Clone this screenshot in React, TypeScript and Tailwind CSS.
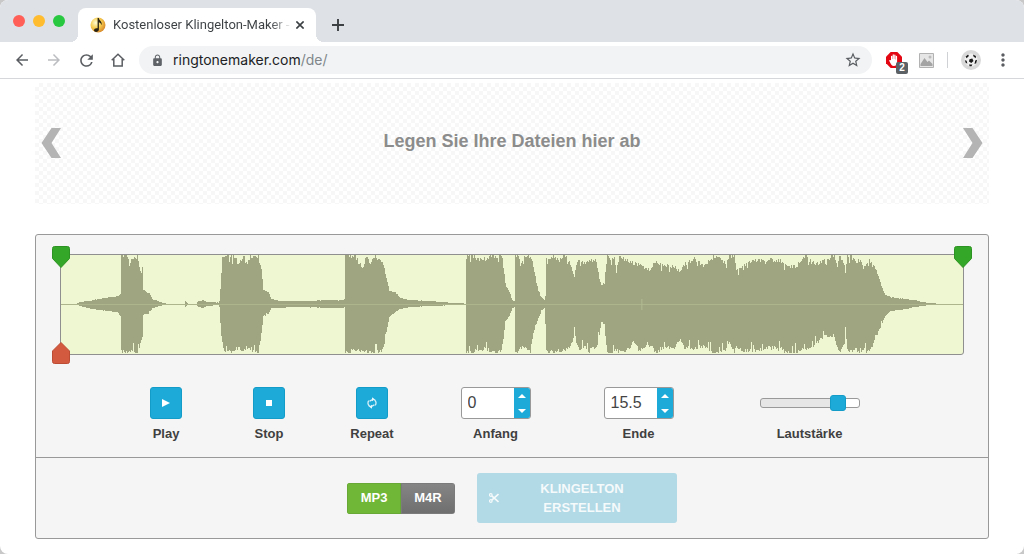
import { useMemo, useState } from "react";
import type { ReactNode } from "react";
import {
  MdArrowBack,
  MdArrowForward,
  MdLock,
  MdMoreVert,
  MdRefresh,
  MdStarBorder,
} from "react-icons/md";

/* Envelope key points: x, height above the axis, height below the axis. */
const ENVELOPE: [number, number, number][] = [
  [0, 0.5, 0.5], [15, 0.5, 0.5], [19, 2, 2], [31, 4, 5], [44, 6, 7], [56, 8, 8], [59, 10, 12], [59.9, 10, 10],
  [60, 49, 49], [66, 48, 49], [69, 43, 48], [76, 48, 49], [79, 34, 40], [81, 36, 32], [82, 14, 11], [88, 11, 9],
  [91, 5, 4], [99, 2, 2], [105, 0.5, 0.5], [123, 0.5, 0.5], [124, 3, 3], [127, 0.5, 0.5], [135, 0.5, 0.5],
  [137, 3, 3], [142, 4, 4], [145, 2, 2], [157, 1.5, 1], [158, 3, 3], [159, 16, 20], [161, 46, 44], [163, 49, 48],
  [169, 49, 48], [174, 48, 46], [177, 40, 43], [182, 49, 48], [186, 41, 43], [189, 49, 48], [197, 47, 49],
  [200, 35, 30], [202, 15, 12], [207, 12, 10], [210, 5, 4], [219, 3, 4], [229, 3, 3], [282, 4, 4], [283, 5, 4],
  [284, 49, 49], [294, 48, 46], [301, 36, 49], [305, 49, 49], [309, 39, 49], [313, 48, 49], [321, 44, 47],
  [325, 27, 30], [328, 13, 13], [334, 12, 8], [339, 6, 5], [349, 4, 3], [369, 3, 2], [394, 1, 1], [404, 0.5, 0.5],
  [405, 48, 48], [411, 49, 49], [419, 44, 46], [424, 46, 45], [430, 49, 49], [439, 48, 49], [441, 46, 42],
  [444, 20, 18], [448, 12, 12], [451, 4, 4], [454.9, 3, 3], [455, 49, 49], [458, 49, 48], [460, 39, 44],
  [463, 47, 44], [470, 49, 49], [473, 39, 28], [476, 21, 20], [481, 7, 7], [484, 4, 4], [485, 8, 20],
  [486, 48, 49], [489, 45, 49], [495, 48, 48], [499, 44, 47], [504, 49, 46], [509, 44, 43], [513, 30, 36],
  [514, 28, 24], [516, 41, 41], [519, 45, 46], [524, 41, 43], [529, 43, 47], [536, 44, 44], [539, 25, 30],
  [541, 20, 18], [544, 21, 20], [546, 42, 42], [547, 49, 49], [551, 42, 48], [554, 49, 49], [556, 33, 46],
  [559, 49, 49], [566, 44, 48], [573, 41, 38], [579, 40, 47], [584, 36, 44], [589, 34, 42], [592, 37, 40],
  [594, 43, 48], [604, 39, 44], [614, 38, 44], [620, 32, 37], [624, 40, 44], [634, 45, 44], [644, 38, 43],
  [653, 48, 49], [659, 49, 49], [665, 41, 48], [669, 49, 38], [674, 48, 49], [676, 34, 42], [684, 40, 48],
  [694, 44, 47], [709, 45, 44], [719, 44, 45], [729, 38, 49], [736, 38, 49], [745, 48, 45], [751, 43, 44],
  [756, 40, 39], [765, 45, 32], [774, 48, 35], [777, 38, 42], [779, 49, 49], [784, 38, 39], [785, 31, 26],
  [787, 49, 46], [791, 49, 49], [795, 42, 44], [799, 44, 48], [803, 37, 45], [809, 44, 49], [814, 37, 38],
  [817, 32, 30], [821, 19, 21], [825, 9, 12], [829, 8, 8], [836, 6, 6], [847, 5, 5], [854, 4, 3], [869, 1, 1],
  [876, 0.5, 0.5], [903, 0.5, 0.5],
];

function noise(n: number) {
  const v = Math.sin(n * 127.1 + 31.7) * 43758.5453;
  return v - Math.floor(v);
}

function buildWave() {
  const columns: string[] = [];
  let k = 0;
  for (let x = 0; x < 903; x++) {
    while (k < ENVELOPE.length - 2 && ENVELOPE[k + 1][0] <= x) k++;
    const [x0, u0, d0] = ENVELOPE[k];
    const [x1, u1, d1] = ENVELOPE[k + 1];
    const t = (x - x0) / (x1 - x0);
    let up = u0 + (u1 - u0) * t;
    let down = d0 + (d1 - d0) * t;
    if (up > 1) {
      up *= 1.04 - 0.1 * noise(x) - (noise(x + 2000) > 0.95 ? 0.12 : 0);
      down *= 1.04 - 0.1 * noise(x + 5000) - (noise(x + 7000) > 0.94 ? 0.15 : 0);
    }
    up = Math.min(49, up);
    down = Math.min(49, down);
    columns.push(`M${x} ${(49 - up).toFixed(1)}h1V${(49 + down).toFixed(1)}h-1z`);
  }
  return columns.join("");
}

function Waveform() {
  const d = useMemo(buildWave, []);
  return (
    <svg viewBox="0 0 903 99" preserveAspectRatio="none" className="block h-full w-full" aria-hidden="true">
      <path d={d} fill="#9fa580" shapeRendering="crispEdges" />
      <path d="M0 49.5H903" stroke="#adb58c" strokeWidth="1" />
      <path d="M581.500 44V55" stroke="#b3ba92" strokeWidth="1" />
    </svg>
  );
}

function Marker({ tone }: { tone: "green" | "red" }) {
  if (tone === "red") {
    return (
      <svg width="18" height="22" viewBox="0 0 18 22" className="block">
        <path d="M9 .5 17.500 9V19.500a2 2 0 0 1-2 2H2.500a2 2 0 0 1-2-2V9z" fill="#d3593f" stroke="#bd4c35" />
      </svg>
    );
  }
  return (
    <svg width="18" height="22" viewBox="0 0 18 22" className="block">
      <path d="M2.500 .5h13a2 2 0 0 1 2 2V12.500L9 21.500.5 12.500V2.500a2 2 0 0 1 2-2z" fill="#34a628" stroke="#2d9423" />
    </svg>
  );
}

function ToolButton({ label, children }: { label: string; children: ReactNode }) {
  return (
    <button aria-label={label} className="flex h-7 w-8 shrink-0 items-center justify-center text-[#5a5d61]">
      {children}
    </button>
  );
}

function BrowserChrome() {
  return (
    <header>
      <div className="flex h-[42px] items-end bg-[#dee1e6]">
        <div className="flex h-[42px] w-[78px] items-center gap-2 pl-[13px]">
          <span className="size-3 rounded-full bg-[#ff5f57]" />
          <span className="size-3 rounded-full bg-[#febc2e]" />
          <span className="size-3 rounded-full bg-[#28c840]" />
        </div>
        <div className="relative flex h-[34px] w-[238px] items-center rounded-t-lg bg-white pr-2 pl-3">
          <span className="absolute bottom-0 -left-2 size-2 bg-[radial-gradient(circle_at_0_0,#dee1e6_8px,#fff_8px)]" />
          <span className="absolute -right-2 bottom-0 size-2 bg-[radial-gradient(circle_at_100%_0,#dee1e6_8px,#fff_8px)]" />
          <svg width="16" height="16" viewBox="0 0 16 16" className="shrink-0" aria-hidden="true">
            <defs>
              <radialGradient id="note-glow" cx="35%" cy="35%" r="70%">
                <stop offset="0" stopColor="#fffbd0" />
                <stop offset=".5" stopColor="#f7cf52" />
                <stop offset="1" stopColor="#d98a2b" />
              </radialGradient>
            </defs>
            <circle cx="8" cy="8" r="7.500" fill="url(#note-glow)" />
            <path d="M7.600 1h1.200c.3 2.600 3.900 3.500 2.700 7.300-.3-1.700-1.300-2.500-2.600-3v7.200c0 3-4.900 3.200-4.900.8 0-1.800 2-2.500 3.600-2z" fill="#2a2416" />
          </svg>
          <span className="ml-[7px] flex-1 overflow-hidden bg-[linear-gradient(to_right,#3c4043_88%,transparent)] bg-clip-text font-['Roboto',sans-serif] text-[13px] leading-4 whitespace-nowrap text-transparent">
            Kostenloser Klingelton-Maker -
          </span>
          <button aria-label="Tab schließen" className="flex size-4 shrink-0 items-center justify-center text-[#3c4043]">
            <svg width="8" height="8" viewBox="0 0 8 8" stroke="currentColor" strokeWidth="1.600" aria-hidden="true">
              <path d="M.4.4 7.600 7.600M7.600.4.4 7.600" />
            </svg>
          </button>
        </div>
        <button aria-label="Neuer Tab" className="ml-3 flex h-[34px] w-5 items-center justify-center text-[#3c4043]">
          <svg width="12" height="12" viewBox="0 0 12 12" stroke="currentColor" strokeWidth="1.900" aria-hidden="true">
            <path d="M6 0V12M0 6H12" />
          </svg>
        </button>
      </div>

      <div className="flex h-[37px] items-center border-b border-[#d5d7da] bg-white pr-[7px] pl-[6px]">
        <ToolButton label="Zurück"><MdArrowBack size={18} /></ToolButton>
        <ToolButton label="Vorwärts"><MdArrowForward size={18} className="text-[#bbbdc0]" /></ToolButton>
        <ToolButton label="Neu laden"><MdRefresh size={19} /></ToolButton>
        <ToolButton label="Startseite">
          <svg width="14" height="14" viewBox="0 0 14 14" fill="none" stroke="currentColor" strokeWidth="1.500">
            <path d="M.7 7.200 7 1.200l6.300 6M2.800 6V13h8.400V6" />
          </svg>
        </ToolButton>
        <div className="ml-[5px] flex h-7 flex-1 items-center rounded-full bg-[#f1f3f4] pr-[10px] pl-3">
          <MdLock size={13} className="shrink-0 text-[#5f6368]" />
          <div className="ml-[9px] flex-1 font-['Inter',sans-serif] text-[14px] leading-5 text-[#202124]">
            ringtonemaker.com<span className="text-[#80868b]">/de/</span>
          </div>
          <button aria-label="Lesezeichen" className="text-[#5a5d61]"><MdStarBorder size={18} /></button>
        </div>
        <button aria-label="Werbeblocker" className="relative ml-[6px] flex h-7 w-8 shrink-0 items-center justify-center">
          <svg width="16" height="16" viewBox="0 0 16 16" aria-hidden="true">
            <path d="M4.700 0h6.600L16 4.700v6.600L11.300 16H4.700L0 11.300V4.700z" fill="#e30613" />
            <path d="M5 8V4.300c0-.9 1.300-.9 1.300 0V7h.3V3c0-.9 1.300-.9 1.300 0v4h.3V3.200c0-.9 1.300-.9 1.300 0V7.500h.3V4.500c0-.9 1.300-.9 1.300 0V10c0 2.500-1.200 4-3.300 4-1.900 0-2.700-1.200-3.600-3.200L3.200 8.700c-.2-.8.7-1.100 1.100-.5z" fill="#fff" />
          </svg>
          <span className="absolute top-4 left-[18px] flex h-3 w-3 items-center justify-center rounded-xs bg-[#5c6166] font-['Liberation_Sans',sans-serif] text-[10px] leading-3 font-bold text-white">
            2
          </span>
        </button>
        <ToolButton label="Bilder">
          <svg width="15" height="15" viewBox="0 0 15 15" aria-hidden="true">
            <path d="M.5.5h14v14H.5z" fill="#e6e6e6" stroke="#b2b2b2" />
            <path d="M1.500 13V11L5.500 5l3 4 1.500-1.500L13.500 11v2z" fill="#a4a4a4" />
            <circle cx="11" cy="4" r="1.500" fill="#bbb" />
          </svg>
        </ToolButton>
        <span className="mx-[5px] h-4 w-px bg-[#cfd1d4]" />
        <button aria-label="Profil" className="flex h-7 w-9 shrink-0 items-center justify-center">
          <svg width="20" height="20" viewBox="0 0 20 20" aria-hidden="true">
            <circle cx="10" cy="10" r="10" fill="#d9d9d9" />
            <circle cx="10" cy="10" r="6.500" fill="#f0f0f0" />
            <path d="m8.500 9.200 2.800-.6 1.200 2.500-2.200 1.800-2.300-1.400zM4.600 6.500l2.500-2 .8 1.500-2.300 2.300zM12 4.500l3 1.500-.3 2.300-2.200-1.900zM3.800 10.200l1.800.5.8 2.800-1.600-.5zM14.200 10.500l1.900-.8-.9 3.500-1.700.8zM8 14.400l3.400.1-.9 1.800H8.600z" fill="#1c1c1c" />
          </svg>
        </button>
        <button aria-label="Menü" className="flex h-7 w-7 shrink-0 items-center justify-center text-[#5a5d61]">
          <MdMoreVert size={20} />
        </button>
      </div>
    </header>
  );
}

function Chevron({ side }: { side: "left" | "right" }) {
  return (
    <svg width="20" height="30" viewBox="0 0 20 30" className="block" aria-hidden="true">
      {side === "left" ? (
        <path d="M10.500 0H20L10.500 15l9.500 15H10.500L.5 15z" fill="#b4b4b4" />
      ) : (
        <path d="M9.500 0H0l9.500 15L0 30h9.500l10-15z" fill="#b4b4b4" />
      )}
    </svg>
  );
}

function Transport({ label, children }: { label: string; children: ReactNode }) {
  return (
    <div className="flex flex-col items-center gap-[6px]">
      <button
        aria-labelledby={`lbl-${label}`}
        className="flex size-8 items-center justify-center rounded-[3px] border border-[#139cc8] bg-[#1eaad8] text-white"
      >
        {children}
      </button>
      <span id={`lbl-${label}`}>{label}</span>
    </div>
  );
}

function TimeField({ label, initial }: { label: string; initial: string }) {
  const [value, setValue] = useState(initial);
  const step = (by: number) => setValue(String(Math.max(0, Math.round((Number(value) + by) * 10) / 10)));
  return (
    <div className="flex flex-col items-center gap-[6px]">
      <div className="flex h-8 w-[70px] overflow-hidden rounded-[3px] border border-[#999] bg-white">
        <input
          id={`field-${label}`}
          value={value}
          onChange={(e) => setValue(e.target.value)}
          className="w-0 flex-1 pl-[6px] text-base font-normal text-[#444] outline-none"
        />
        <div className="flex w-4 flex-col bg-[#1eaad8]">
          <button aria-label={`${label} erhöhen`} onClick={() => step(0.1)} className="flex flex-1 items-center justify-center">
            <svg width="8" height="4" viewBox="0 0 8 4"><path d="M4 0 8 4H0z" fill="#fff" /></svg>
          </button>
          <button aria-label={`${label} verringern`} onClick={() => step(-0.1)} className="flex flex-1 items-center justify-center">
            <svg width="8" height="4" viewBox="0 0 8 4"><path d="M0 0h8L4 4z" fill="#fff" /></svg>
          </button>
        </div>
      </div>
      <label htmlFor={`field-${label}`}>{label}</label>
    </div>
  );
}

function Editor() {
  const [format, setFormat] = useState("MP3");
  const [volume, setVolume] = useState(85);
  return (
    <section className="mt-[30px] rounded-[3px] border border-[#999] bg-[#f5f5f5]">
      <div className="px-6 pt-[19px]">
        <div className="relative h-[101px] rounded-[3px] border border-[#8f8f8f] bg-[#eef6d2]">
          <Waveform />
          <button aria-label="Anfangsmarke" className="absolute -top-[9px] -left-[9px]"><Marker tone="green" /></button>
          <button aria-label="Endmarke" className="absolute -top-[9px] -right-[9px]"><Marker tone="green" /></button>
          <button aria-label="Abspielposition" className="absolute -bottom-[10px] -left-[9px]"><Marker tone="red" /></button>
        </div>
        <div className="grid grid-cols-[103px_103px_103px_144px_142px_200px] justify-center pt-8 pb-[14px] text-[13px] leading-[18px] font-bold text-[#404040]">
          <Transport label="Play">
            <svg width="8" height="8" viewBox="0 0 8 8"><path d="M0 0 8 4 0 8z" fill="#fff" /></svg>
          </Transport>
          <Transport label="Stop">
            <svg width="6" height="6" viewBox="0 0 6 6"><path d="M0 0h6v6H0z" fill="#fff" /></svg>
          </Transport>
          <Transport label="Repeat">
            <svg width="10" height="12" viewBox="0 0 10 12" fill="none" stroke="#d5eff8" strokeWidth="1.300">
              <path d="M3.800 9.800A4 4 0 0 1 1.800 3.600M6.200 2.200a4 4 0 0 1 2 6.200M2.600 4.200 6.400 2.200M7.400 7.800 3.600 9.800" />
              <path d="M5 .3v4L7.600 2.200zM5 7.700v4L2.400 9.800z" fill="#e8f6fb" stroke="none" />
            </svg>
          </Transport>
          <TimeField label="Anfang" initial="0" />
          <TimeField label="Ende" initial="15.5" />
          <div className="flex flex-col items-center gap-[6px]">
            <div className="flex h-8 items-center">
              <input
                id="volume"
                type="range"
                min={0}
                max={100}
                value={volume}
                onChange={(e) => setVolume(Number(e.target.value))}
                style={{ backgroundImage: `linear-gradient(to right, #e6e6e6 ${volume}%, #fff ${volume}%)` }}
                className="h-[10px] w-[100px] appearance-none rounded-[3px] border border-[#999] [&::-webkit-slider-thumb]:size-4 [&::-webkit-slider-thumb]:appearance-none [&::-webkit-slider-thumb]:rounded-[3px] [&::-webkit-slider-thumb]:border [&::-webkit-slider-thumb]:border-solid [&::-webkit-slider-thumb]:border-[#139cc8] [&::-webkit-slider-thumb]:bg-[#1eaad8]"
              />
            </div>
            <label htmlFor="volume">Lautstärke</label>
          </div>
        </div>
      </div>
      <div className="flex items-center justify-center gap-[22px] border-t border-[#999] py-[15px] text-[13px] font-bold">
        <div className="flex h-[31px] overflow-hidden rounded-[3px]" role="group" aria-label="Format">
          {["MP3", "M4R"].map((name) => (
            <button
              key={name}
              aria-pressed={format === name}
              onClick={() => setFormat(name)}
              className={
                format === name
                  ? "w-[54px] border border-[#67a836] bg-[#70b637] text-white"
                  : "w-[54px] border border-[#7b7b7b] bg-linear-to-b from-[#858585] to-[#6f6f6f] text-white"
              }
            >
              {name}
            </button>
          ))}
        </div>
        <button className="flex h-[50px] w-[200px] items-center rounded-[3px] bg-[#b2d9e6] px-3 leading-[19px] text-[#f5fafb]">
          <svg width="10" height="10" viewBox="0 0 10 10" fill="none" stroke="currentColor" strokeWidth="1.200" aria-hidden="true">
            <circle cx="1.800" cy="2" r="1.300" />
            <circle cx="1.800" cy="8" r="1.300" />
            <path d="M2.800 2.800 9.500 9M2.800 7.200 9.500 1" strokeWidth="1.700" />
          </svg>
          <span className="flex-1 px-8 text-center">KLINGELTON ERSTELLEN</span>
        </button>
      </div>
    </section>
  );
}

export default function App() {
  return (
    <div className="min-h-screen bg-[#c8c8c8]">
      <div className="flex min-h-screen flex-col overflow-hidden rounded-lg bg-white font-['Liberation_Sans',Arial,sans-serif]">
        <BrowserChrome />
        <main className="px-[35px] pt-1 pb-[15px]">
          <section className="flex h-[121px] items-center justify-between bg-[repeating-conic-gradient(#f7f7f7_0_25%,#fff_0_50%)] bg-[length:8px_8px] px-[6px] pb-[2px]">
            <button aria-label="Zurückblättern"><Chevron side="left" /></button>
            <h1 className="pb-1 text-lg leading-6 font-bold text-[#8c8c8c]">Legen Sie Ihre Dateien hier ab</h1>
            <button aria-label="Weiterblättern"><Chevron side="right" /></button>
          </section>
          <Editor />
        </main>
      </div>
    </div>
  );
}
